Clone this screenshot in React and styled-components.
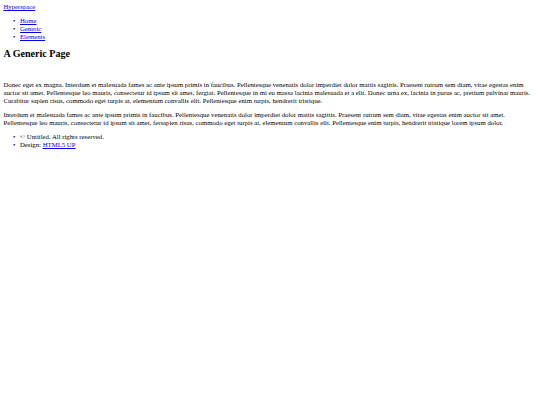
import React from "react";
import styled, { createGlobalStyle } from "styled-components";

const GlobalStyle = createGlobalStyle`
  html, body {
    background: #ffffff;
  }
  body {
    margin: 3px 3.4px;
    font-family: "Liberation Serif", "Times New Roman", serif;
    font-size: 6.75px;
    line-height: 8px;
    color: #000000;
  }
  a {
    color: #0000ee;
    text-decoration: underline;
  }
`;

const Header = styled.header`
  display: block;
`;

const Logo = styled.a`
  font-size: 6.75px;
`;

const List = styled.ul`
  margin: 6px 0;
  padding-left: 16.6px;
  list-style: none;
`;

const Item = styled.li`
  font-size: 6.75px;

  &::before {
    content: "•";
    display: inline-block;
    width: 7px;
    margin-left: -7px;
  }
`;

const Main = styled.section`
  display: block;
`;

const Title = styled.h2`
  font-size: 10.1px;
  line-height: 11.5px;
  font-weight: bold;
  margin: 7.3px 0;
`;

const ImageSlot = styled.span`
  display: block;
  height: 8px;
`;

const Para = styled.p`
  margin: 6px 0;
`;

const Footer = styled.footer`
  display: block;
`;

const App = () => {
  return (
    <>
      <GlobalStyle />
      <Header>
        <Logo href="#">Hyperspace</Logo>
        <nav>
          <List>
            <Item><a href="#">Home</a></Item>
            <Item><a href="#">Generic</a></Item>
            <Item><a href="#">Elements</a></Item>
          </List>
        </nav>
      </Header>
      <Main>
        <Title>A Generic Page</Title>
        <ImageSlot />
        <Para>
          Donec eget ex magna. Interdum et malesuada fames ac ante ipsum primis in faucibus. Pellentesque venenatis dolor imperdiet dolor mattis sagittis. Praesent rutrum sem diam, vitae egestas enim auctor sit amet. Pellentesque leo mauris, consectetur id ipsum sit amet, fergiat. Pellentesque in mi eu massa lacinia malesuada et a elit. Donec urna ex, lacinia in purus ac, pretium pulvinar mauris. Curabitur sapien risus, commodo eget turpis at, elementum convallis elit. Pellentesque enim turpis, hendrerit tristique.
        </Para>
        <Para>
          Interdum et malesuada fames ac ante ipsum primis in faucibus. Pellentesque venenatis dolor imperdiet dolor mattis sagittis. Praesent rutrum sem diam, vitae egestas enim auctor sit amet. Pellentesque leo mauris, consectetur id ipsum sit amet, fersapien risus, commodo eget turpis at, elementum convallis elit. Pellentesque enim turpis, hendrerit tristique lorem ipsum dolor.
        </Para>
      </Main>
      <Footer>
        <List>
          <Item>© Untitled. All rights reserved.</Item>
          <Item>Design: <a href="#">HTML5 UP</a></Item>
        </List>
      </Footer>
    </>
  );
};

export default App;
